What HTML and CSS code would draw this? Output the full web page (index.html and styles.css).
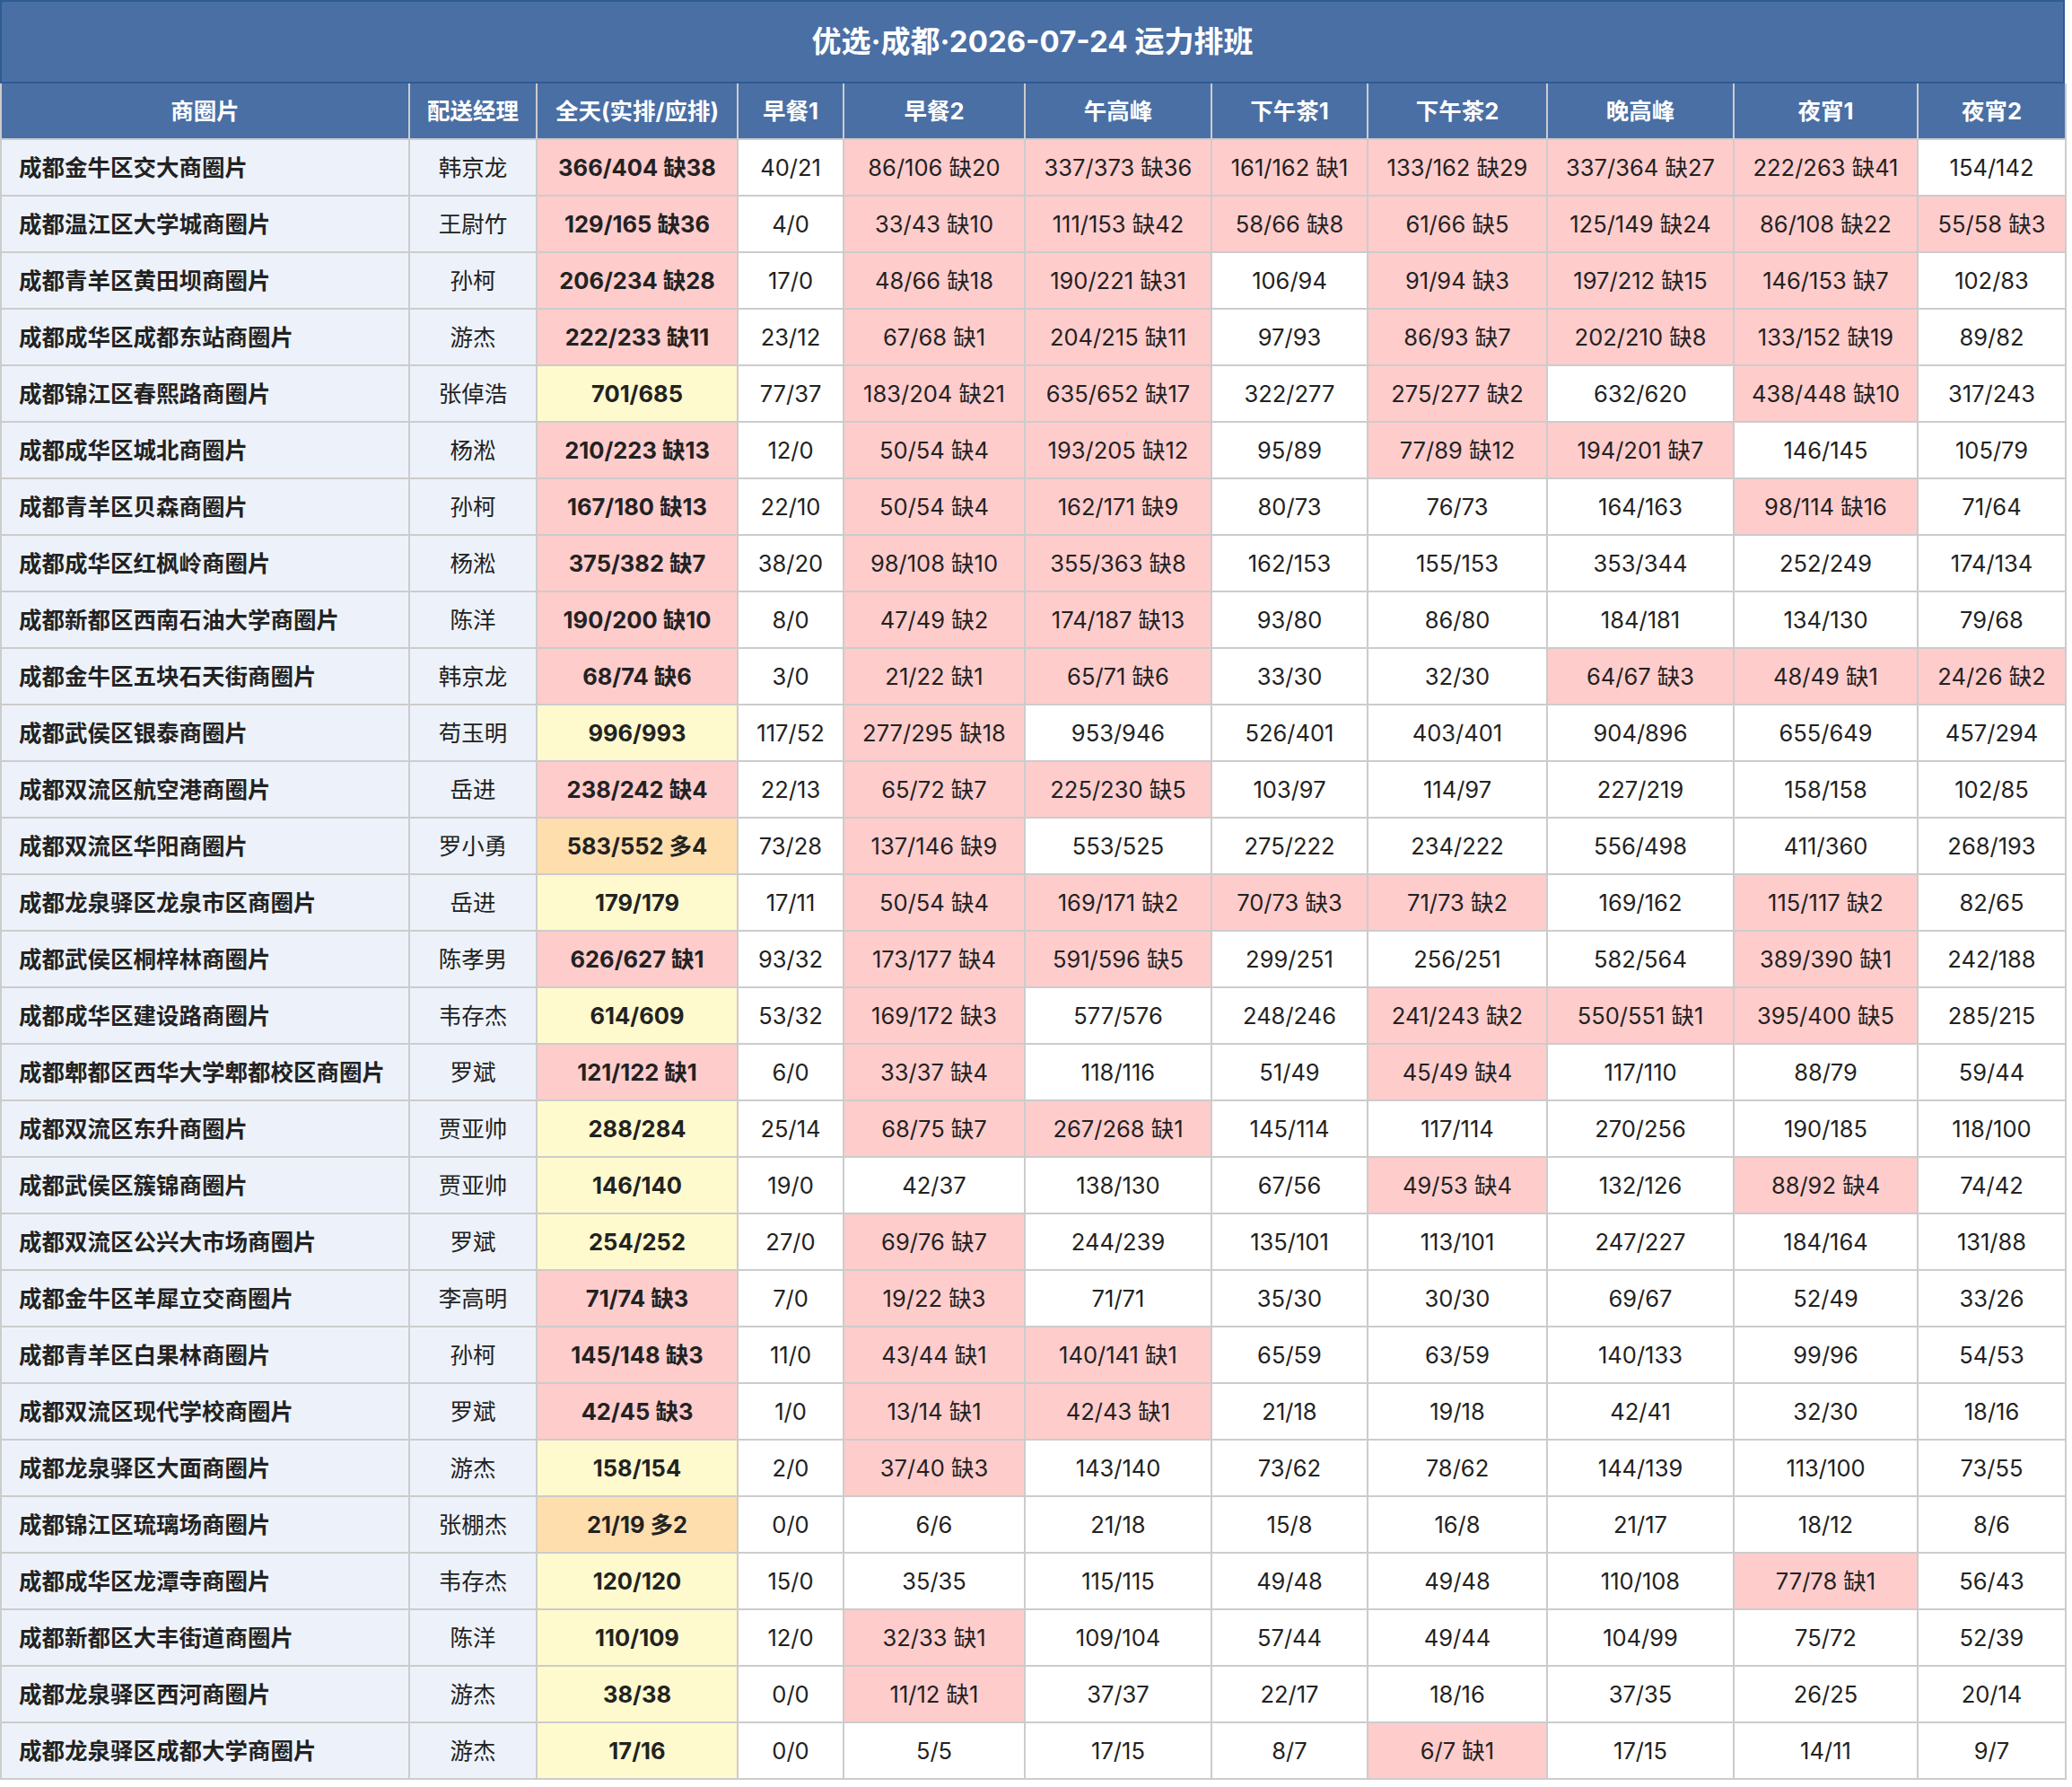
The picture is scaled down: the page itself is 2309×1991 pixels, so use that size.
FILE: index.html
```html
<!DOCTYPE html>
<html lang="zh-CN">
<head>
<meta charset="utf-8">
<title>优选·成都·2026-07-24 运力排班</title>
<link rel="stylesheet" href="styles.css">
</head>
<body>
<div class="sheet">
  <div class="title">优选·成都·2026-07-24 运力排班</div>
  <table class="grid">
    <colgroup>
      <col class="w-name"><col class="w-mgr"><col class="w-all"><col class="w-b1"><col class="w-b2"><col class="w-noon"><col class="w-t1"><col class="w-t2"><col class="w-eve"><col class="w-n1"><col class="w-n2">
    </colgroup>
    <thead>
      <tr><th>商圈片</th><th>配送经理</th><th>全天(实排/应排)</th><th>早餐1</th><th>早餐2</th><th>午高峰</th><th>下午茶1</th><th>下午茶2</th><th>晚高峰</th><th>夜宵1</th><th>夜宵2</th></tr>
    </thead>
    <tbody>
      <tr><td class="name">成都金牛区交大商圈片</td><td class="mgr">韩京龙</td><td class="all p">366/404 缺38</td><td>40/21</td><td class="p">86/106 缺20</td><td class="p">337/373 缺36</td><td class="p">161/162 缺1</td><td class="p">133/162 缺29</td><td class="p">337/364 缺27</td><td class="p">222/263 缺41</td><td>154/142</td></tr>
      <tr><td class="name">成都温江区大学城商圈片</td><td class="mgr">王尉竹</td><td class="all p">129/165 缺36</td><td>4/0</td><td class="p">33/43 缺10</td><td class="p">111/153 缺42</td><td class="p">58/66 缺8</td><td class="p">61/66 缺5</td><td class="p">125/149 缺24</td><td class="p">86/108 缺22</td><td class="p">55/58 缺3</td></tr>
      <tr><td class="name">成都青羊区黄田坝商圈片</td><td class="mgr">孙柯</td><td class="all p">206/234 缺28</td><td>17/0</td><td class="p">48/66 缺18</td><td class="p">190/221 缺31</td><td>106/94</td><td class="p">91/94 缺3</td><td class="p">197/212 缺15</td><td class="p">146/153 缺7</td><td>102/83</td></tr>
      <tr><td class="name">成都成华区成都东站商圈片</td><td class="mgr">游杰</td><td class="all p">222/233 缺11</td><td>23/12</td><td class="p">67/68 缺1</td><td class="p">204/215 缺11</td><td>97/93</td><td class="p">86/93 缺7</td><td class="p">202/210 缺8</td><td class="p">133/152 缺19</td><td>89/82</td></tr>
      <tr><td class="name">成都锦江区春熙路商圈片</td><td class="mgr">张倬浩</td><td class="all y">701/685</td><td>77/37</td><td class="p">183/204 缺21</td><td class="p">635/652 缺17</td><td>322/277</td><td class="p">275/277 缺2</td><td>632/620</td><td class="p">438/448 缺10</td><td>317/243</td></tr>
      <tr><td class="name">成都成华区城北商圈片</td><td class="mgr">杨淞</td><td class="all p">210/223 缺13</td><td>12/0</td><td class="p">50/54 缺4</td><td class="p">193/205 缺12</td><td>95/89</td><td class="p">77/89 缺12</td><td class="p">194/201 缺7</td><td>146/145</td><td>105/79</td></tr>
      <tr><td class="name">成都青羊区贝森商圈片</td><td class="mgr">孙柯</td><td class="all p">167/180 缺13</td><td>22/10</td><td class="p">50/54 缺4</td><td class="p">162/171 缺9</td><td>80/73</td><td>76/73</td><td>164/163</td><td class="p">98/114 缺16</td><td>71/64</td></tr>
      <tr><td class="name">成都成华区红枫岭商圈片</td><td class="mgr">杨淞</td><td class="all p">375/382 缺7</td><td>38/20</td><td class="p">98/108 缺10</td><td class="p">355/363 缺8</td><td>162/153</td><td>155/153</td><td>353/344</td><td>252/249</td><td>174/134</td></tr>
      <tr><td class="name">成都新都区西南石油大学商圈片</td><td class="mgr">陈洋</td><td class="all p">190/200 缺10</td><td>8/0</td><td class="p">47/49 缺2</td><td class="p">174/187 缺13</td><td>93/80</td><td>86/80</td><td>184/181</td><td>134/130</td><td>79/68</td></tr>
      <tr><td class="name">成都金牛区五块石天街商圈片</td><td class="mgr">韩京龙</td><td class="all p">68/74 缺6</td><td>3/0</td><td class="p">21/22 缺1</td><td class="p">65/71 缺6</td><td>33/30</td><td>32/30</td><td class="p">64/67 缺3</td><td class="p">48/49 缺1</td><td class="p">24/26 缺2</td></tr>
      <tr><td class="name">成都武侯区银泰商圈片</td><td class="mgr">苟玉明</td><td class="all y">996/993</td><td>117/52</td><td class="p">277/295 缺18</td><td>953/946</td><td>526/401</td><td>403/401</td><td>904/896</td><td>655/649</td><td>457/294</td></tr>
      <tr><td class="name">成都双流区航空港商圈片</td><td class="mgr">岳进</td><td class="all p">238/242 缺4</td><td>22/13</td><td class="p">65/72 缺7</td><td class="p">225/230 缺5</td><td>103/97</td><td>114/97</td><td>227/219</td><td>158/158</td><td>102/85</td></tr>
      <tr><td class="name">成都双流区华阳商圈片</td><td class="mgr">罗小勇</td><td class="all o">583/552 多4</td><td>73/28</td><td class="p">137/146 缺9</td><td>553/525</td><td>275/222</td><td>234/222</td><td>556/498</td><td>411/360</td><td>268/193</td></tr>
      <tr><td class="name">成都龙泉驿区龙泉市区商圈片</td><td class="mgr">岳进</td><td class="all y">179/179</td><td>17/11</td><td class="p">50/54 缺4</td><td class="p">169/171 缺2</td><td class="p">70/73 缺3</td><td class="p">71/73 缺2</td><td>169/162</td><td class="p">115/117 缺2</td><td>82/65</td></tr>
      <tr><td class="name">成都武侯区桐梓林商圈片</td><td class="mgr">陈孝男</td><td class="all p">626/627 缺1</td><td>93/32</td><td class="p">173/177 缺4</td><td class="p">591/596 缺5</td><td>299/251</td><td>256/251</td><td>582/564</td><td class="p">389/390 缺1</td><td>242/188</td></tr>
      <tr><td class="name">成都成华区建设路商圈片</td><td class="mgr">韦存杰</td><td class="all y">614/609</td><td>53/32</td><td class="p">169/172 缺3</td><td>577/576</td><td>248/246</td><td class="p">241/243 缺2</td><td class="p">550/551 缺1</td><td class="p">395/400 缺5</td><td>285/215</td></tr>
      <tr><td class="name">成都郫都区西华大学郫都校区商圈片</td><td class="mgr">罗斌</td><td class="all p">121/122 缺1</td><td>6/0</td><td class="p">33/37 缺4</td><td>118/116</td><td>51/49</td><td class="p">45/49 缺4</td><td>117/110</td><td>88/79</td><td>59/44</td></tr>
      <tr><td class="name">成都双流区东升商圈片</td><td class="mgr">贾亚帅</td><td class="all y">288/284</td><td>25/14</td><td class="p">68/75 缺7</td><td class="p">267/268 缺1</td><td>145/114</td><td>117/114</td><td>270/256</td><td>190/185</td><td>118/100</td></tr>
      <tr><td class="name">成都武侯区簇锦商圈片</td><td class="mgr">贾亚帅</td><td class="all y">146/140</td><td>19/0</td><td>42/37</td><td>138/130</td><td>67/56</td><td class="p">49/53 缺4</td><td>132/126</td><td class="p">88/92 缺4</td><td>74/42</td></tr>
      <tr><td class="name">成都双流区公兴大市场商圈片</td><td class="mgr">罗斌</td><td class="all y">254/252</td><td>27/0</td><td class="p">69/76 缺7</td><td>244/239</td><td>135/101</td><td>113/101</td><td>247/227</td><td>184/164</td><td>131/88</td></tr>
      <tr><td class="name">成都金牛区羊犀立交商圈片</td><td class="mgr">李高明</td><td class="all p">71/74 缺3</td><td>7/0</td><td class="p">19/22 缺3</td><td>71/71</td><td>35/30</td><td>30/30</td><td>69/67</td><td>52/49</td><td>33/26</td></tr>
      <tr><td class="name">成都青羊区白果林商圈片</td><td class="mgr">孙柯</td><td class="all p">145/148 缺3</td><td>11/0</td><td class="p">43/44 缺1</td><td class="p">140/141 缺1</td><td>65/59</td><td>63/59</td><td>140/133</td><td>99/96</td><td>54/53</td></tr>
      <tr><td class="name">成都双流区现代学校商圈片</td><td class="mgr">罗斌</td><td class="all p">42/45 缺3</td><td>1/0</td><td class="p">13/14 缺1</td><td class="p">42/43 缺1</td><td>21/18</td><td>19/18</td><td>42/41</td><td>32/30</td><td>18/16</td></tr>
      <tr><td class="name">成都龙泉驿区大面商圈片</td><td class="mgr">游杰</td><td class="all y">158/154</td><td>2/0</td><td class="p">37/40 缺3</td><td>143/140</td><td>73/62</td><td>78/62</td><td>144/139</td><td>113/100</td><td>73/55</td></tr>
      <tr><td class="name">成都锦江区琉璃场商圈片</td><td class="mgr">张棚杰</td><td class="all o">21/19 多2</td><td>0/0</td><td>6/6</td><td>21/18</td><td>15/8</td><td>16/8</td><td>21/17</td><td>18/12</td><td>8/6</td></tr>
      <tr><td class="name">成都成华区龙潭寺商圈片</td><td class="mgr">韦存杰</td><td class="all y">120/120</td><td>15/0</td><td>35/35</td><td>115/115</td><td>49/48</td><td>49/48</td><td>110/108</td><td class="p">77/78 缺1</td><td>56/43</td></tr>
      <tr><td class="name">成都新都区大丰街道商圈片</td><td class="mgr">陈洋</td><td class="all y">110/109</td><td>12/0</td><td class="p">32/33 缺1</td><td>109/104</td><td>57/44</td><td>49/44</td><td>104/99</td><td>75/72</td><td>52/39</td></tr>
      <tr><td class="name">成都龙泉驿区西河商圈片</td><td class="mgr">游杰</td><td class="all y">38/38</td><td>0/0</td><td class="p">11/12 缺1</td><td>37/37</td><td>22/17</td><td>18/16</td><td>37/35</td><td>26/25</td><td>20/14</td></tr>
      <tr><td class="name">成都龙泉驿区成都大学商圈片</td><td class="mgr">游杰</td><td class="all y">17/16</td><td>0/0</td><td>5/5</td><td>17/15</td><td>8/7</td><td class="p">6/7 缺1</td><td>17/15</td><td>14/11</td><td>9/7</td></tr>
    </tbody>
  </table>
</div>
</body>
</html>
```

FILE: styles.css
```css
html, body {
  margin: 0;
  padding: 0;
  background: #ffffff;
}

body {
  padding: 0 8px 8px 0;
  font-family: Inter, "Noto Sans CJK SC", sans-serif;
  color: #222222;
}

.sheet {
  width: 2301px;
}

.title {
  box-sizing: border-box;
  height: 93px;
  line-height: 89px;
  border: 2px solid #2f5b93;
  background: #4a6fa5;
  color: #ffffff;
  font-size: 33px;
  font-weight: 700;
  text-align: center;
}

.grid {
  width: 2301px;
  border-collapse: collapse;
  table-layout: fixed;
  font-size: 25.5px;
}

.w-name { width: 455px; }
.w-mgr  { width: 142px; }
.w-all  { width: 224px; }
.w-b1   { width: 118px; }
.w-b2   { width: 202px; }
.w-noon { width: 208px; }
.w-t1   { width: 174px; }
.w-t2   { width: 200px; }
.w-eve  { width: 208px; }
.w-n1   { width: 205px; }
.w-n2   { width: 165px; }

.grid th,
.grid td {
  border: 2px solid #cccccc;
  text-align: center;
  white-space: nowrap;
  overflow: hidden;
}

.grid th {
  border-top: 0;
  background: #4a6fa5;
  color: #ffffff;
  font-weight: 700;
  line-height: 36px;
  padding: 13px 8px 12px;
}

.grid td {
  line-height: 37px;
  padding: 12px 8px;
  background: #ffffff;
}

.grid td.name {
  text-align: left;
  padding-left: 19px;
  font-weight: 700;
  background: #edf2fa;
}

.grid td.mgr {
  background: #edf2fa;
}

.grid td.all {
  font-weight: 700;
}

.grid td.p { background: #ffcccc; }
.grid td.y { background: #fffacd; }
.grid td.o { background: #ffdeae; }
```
